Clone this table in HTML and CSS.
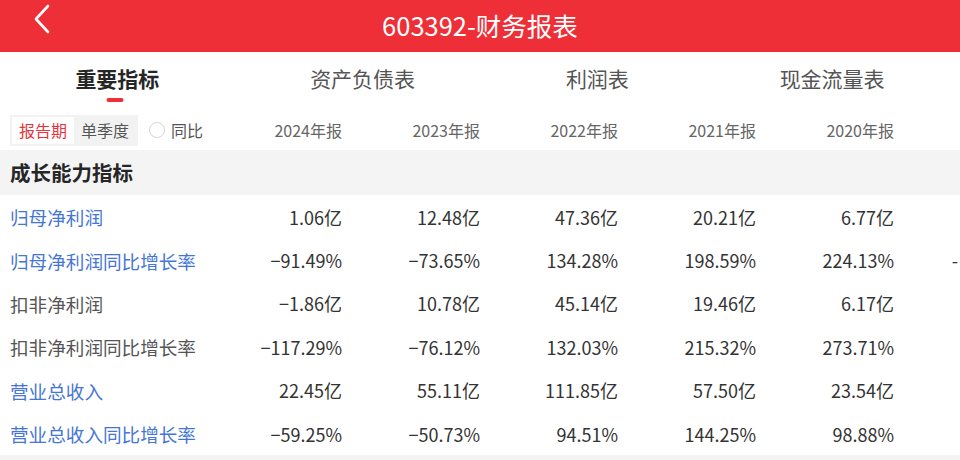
FILE: index.html
```html
<!DOCTYPE html>
<html lang="zh-CN">
<head>
<meta charset="utf-8">
<title>603392-财务报表</title>
<link rel="stylesheet" href="styles.css">
</head>
<body>
<div class="page">
  <header class="topbar">
    <svg class="back" width="20" height="32" viewBox="0 0 20 32"><polyline points="15,3 3,16 15,29" fill="none" stroke="#fff" stroke-width="2.6" stroke-linecap="round" stroke-linejoin="round"/></svg>
    <h1 class="title">603392-财务报表</h1>
  </header>
  <nav class="tabs">
    <div class="tab active">重要指标<span class="ind"></span></div>
    <div class="tab">资产负债表</div>
    <div class="tab">利润表</div>
    <div class="tab">现金流量表</div>
  </nav>
  <div class="row subrow">
    <div class="label controls">
      <div class="seg"><span class="seg-on">报告期</span><span class="seg-off">单季度</span></div>
      <span class="radio"></span><span class="yoy">同比</span>
    </div>
    <div class="cell head">2024年报</div>
    <div class="cell head">2023年报</div>
    <div class="cell head">2022年报</div>
    <div class="cell head">2021年报</div>
    <div class="cell head">2020年报</div>
  </div>
  <div class="section">成长能力指标</div>
  <div class="row data">
    <div class="label blue">归母净利润</div>
    <div class="cell">1.06亿</div><div class="cell">12.48亿</div><div class="cell">47.36亿</div><div class="cell">20.21亿</div><div class="cell">6.77亿</div>
  </div>
  <div class="row data">
    <div class="label blue">归母净利润同比增长率</div>
    <div class="cell">−91.49%</div><div class="cell">−73.65%</div><div class="cell">134.28%</div><div class="cell">198.59%</div><div class="cell">224.13%</div><div class="cell extra">-</div>
  </div>
  <div class="row data">
    <div class="label gray">扣非净利润</div>
    <div class="cell">−1.86亿</div><div class="cell">10.78亿</div><div class="cell">45.14亿</div><div class="cell">19.46亿</div><div class="cell">6.17亿</div>
  </div>
  <div class="row data">
    <div class="label gray">扣非净利润同比增长率</div>
    <div class="cell">−117.29%</div><div class="cell">−76.12%</div><div class="cell">132.03%</div><div class="cell">215.32%</div><div class="cell">273.71%</div>
  </div>
  <div class="row data">
    <div class="label blue">营业总收入</div>
    <div class="cell">22.45亿</div><div class="cell">55.11亿</div><div class="cell">111.85亿</div><div class="cell">57.50亿</div><div class="cell">23.54亿</div>
  </div>
  <div class="row data">
    <div class="label blue">营业总收入同比增长率</div>
    <div class="cell">−59.25%</div><div class="cell">−50.73%</div><div class="cell">94.51%</div><div class="cell">144.25%</div><div class="cell">98.88%</div>
  </div>
  <div class="foot"></div>
</div>
</body>
</html>
```

FILE: styles.css
```css
* { box-sizing: border-box; margin: 0; padding: 0; }
html, body { width: 960px; height: 460px; overflow: hidden; background: #fff; }
body { font-family: "Noto Sans CJK SC", "Noto Sans", sans-serif; color: #333; }
.page { width: 960px; display: flex; flex-direction: column; }

.topbar { height: 52px; background: #ee2f38; display: flex; align-items: center; justify-content: center; position: relative; }
.back { position: absolute; left: 33px; top: 3px; }
.title { color: #fff; font-weight: 400; font-size: 25.5px; line-height: 40px; margin-top: -3px; letter-spacing: 0; }

.tabs { height: 58px; display: flex; justify-content: space-around; align-items: flex-start; }
.tab { position: relative; font-size: 21px; line-height: 30px; margin-top: 11px; color: #555; }
.tab.active { color: #262626; font-weight: 700; }
.ind { position: absolute; left: 50%; transform: translateX(-50%); margin-left: -2px; top: 35px; width: 17px; height: 4px; border-radius: 2px; background: #ee2f38; }

.row { display: flex; align-items: center; }
.label { width: 204px; flex: none; padding-left: 10px; }
.cell { width: 138px; flex: none; text-align: right; white-space: nowrap; }
.cell.extra { width: 64px; text-align: right; color: #888; }

.subrow { height: 40px; }
.controls { display: flex; align-items: center; padding-left: 10px; }
.seg { display: flex; background: #f2f2f2; padding: 2px; height: 31px; align-items: stretch; border-radius: 1px; }
.seg span { font-size: 16px; line-height: 27px; padding: 0 7px; }
.seg-on { background: #fff; color: #e8323c; }
.seg-off { color: #555; }
.radio { width: 16px; height: 16px; border: 1px solid #d6d6d6; border-radius: 50%; margin-left: 11px; }
.yoy { font-size: 16px; color: #555; margin-left: 6px; }
.head { font-size: 16px; color: #666; }

.section { height: 45px; background: #f4f4f5; font-size: 20.5px; font-weight: 700; color: #262626; padding-left: 10px; line-height: 45px; }

.data { height: 43.4px; }
.data .label { font-size: 18.6px; }
.data .cell { font-size: 18px; color: #333; }
.blue { color: #4576d6; }
.gray { color: #555; }

.foot { height: 20px; background: #f4f4f5; }
```
